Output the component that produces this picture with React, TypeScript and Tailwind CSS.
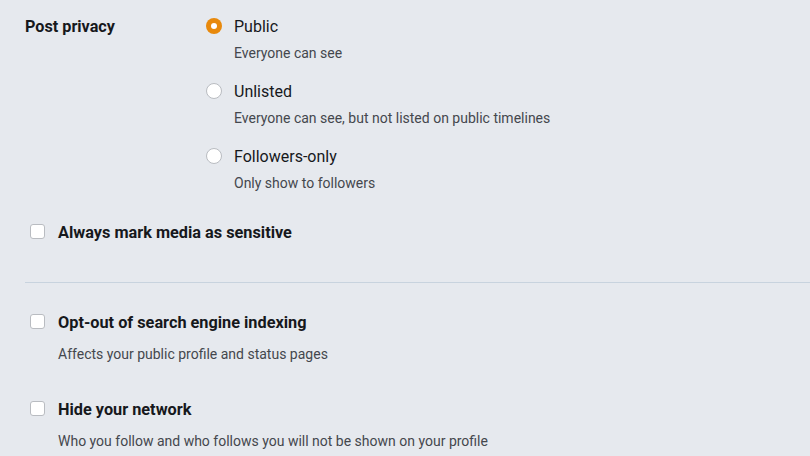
const privacyOptions = [
  { id: "public", label: "Public", hint: "Everyone can see" },
  { id: "unlisted", label: "Unlisted", hint: "Everyone can see, but not listed on public timelines" },
  { id: "private", label: "Followers-only", hint: "Only show to followers" },
];

function Radio({ checked }: { checked: boolean }) {
  if (checked) {
    return (
      <span className="mt-[1px] flex h-4 w-4 shrink-0 items-center justify-center rounded-full bg-[#e8890c]">
        <span className="h-[6px] w-[6px] rounded-full bg-white" />
      </span>
    );
  }
  return <span className="mt-[1px] h-4 w-4 shrink-0 rounded-full border border-[#b9bcc1] bg-white" />;
}

function Checkbox() {
  return <span className="mt-[1px] h-[15px] w-[15px] shrink-0 rounded-[3px] border border-[#b9bcc1] bg-white" />;
}

function CheckRow({ label, hint }: { label: string; hint?: string }) {
  return (
    <div className="flex items-start pl-[5px]">
      <Checkbox />
      <div className="ml-[13px]">
        <div className="text-[16.3px] leading-5 font-bold text-[#16181c]">{label}</div>
        {hint && <div className="mt-[11px] text-[14px] leading-5 text-[#44474d]">{hint}</div>}
      </div>
    </div>
  );
}

export default function App() {
  return (
    <div
      className="min-h-screen bg-[#e6e9ee] pl-[25px] pt-[17px]"
      style={{ fontFamily: "Roboto, 'Liberation Sans', sans-serif" }}
    >
      <div className="flex">
        <div className="w-[181px] text-[16.2px] leading-5 font-bold text-[#16181c]">Post privacy</div>
        <div className="flex flex-col gap-[19px]">
          {privacyOptions.map((o) => (
            <div key={o.id} className="flex items-start">
              <Radio checked={o.id === "public"} />
              <div className="ml-3">
                <div className="text-[16px] leading-5 text-[#16181c]">{o.label}</div>
                <div className="mt-[6px] text-[14px] leading-5 text-[#44474d]">{o.hint}</div>
              </div>
            </div>
          ))}
        </div>
      </div>

      <div className="mt-[30px]">
        <CheckRow label="Always mark media as sensitive" />
      </div>

      <div className="mt-[39px] h-px bg-[#c8d3de]" />

      <div className="mt-[30px] flex flex-col gap-[36px]">
        <CheckRow label="Opt-out of search engine indexing" hint="Affects your public profile and status pages" />
        <CheckRow label="Hide your network" hint="Who you follow and who follows you will not be shown on your profile" />
      </div>
    </div>
  );
}
